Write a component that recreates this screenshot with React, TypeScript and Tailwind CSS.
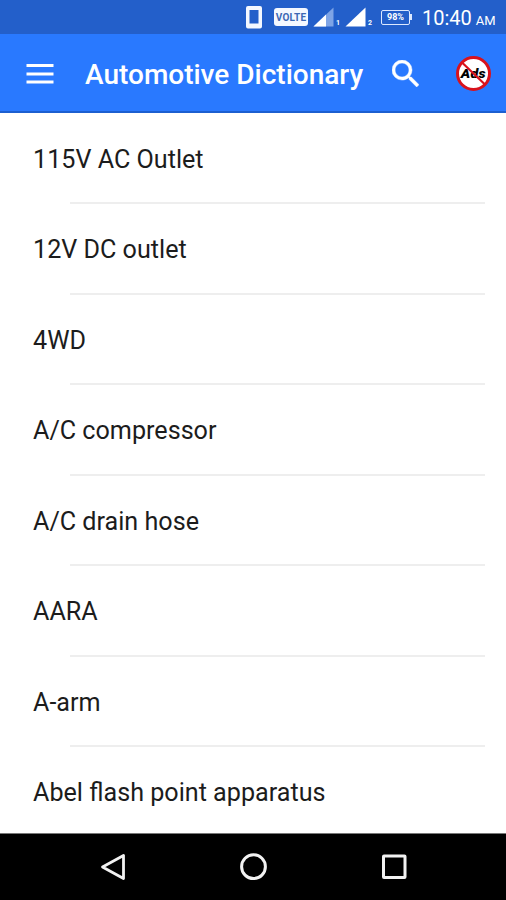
const TERMS = [
  "115V AC Outlet",
  "12V DC outlet",
  "4WD",
  "A/C compressor",
  "A/C drain hose",
  "AARA",
  "A-arm",
  "Abel flash point apparatus",
];

const PhoneIcon = () => (
  <svg width="16" height="24" viewBox="0 0 16 24" className="shrink-0">
    <path
      fill="#f4f8ff"
      fillRule="evenodd"
      d="M2 1h12a2 2 0 0 1 2 2v18.500a2 2 0 0 1-2 2H2a2 2 0 0 1-2-2V3a2 2 0 0 1 2-2zM3.500 5v13.500h9V5z"
    />
  </svg>
);

const SignalIcon: React.FC<{ sim: string; partial?: boolean }> = ({
  sim,
  partial,
}) => (
  <div className="flex items-end">
    <svg width="21" height="20" viewBox="0 0 21 20">
      <path
        d="M0.5 19.5L20.5 0.5V19.5z"
        fill={partial ? "#7ea4e6" : "#ffffff"}
      />
      {partial && <path d="M0.5 19.5L13 7.6V19.5z" fill="#ffffff" />}
    </svg>
    <span className="ml-[2px] w-[5px] text-[7px] leading-[7px] font-bold">
      {sim}
    </span>
  </div>
);

const StatusBar = () => (
  <div className="flex h-[34px] shrink-0 items-center bg-[#235fca] pl-[246px] text-white">
    <PhoneIcon />
    <span className="ml-3 flex h-[18px] w-[34px] items-center justify-center rounded-[3px] bg-[#f4f8ff] text-[10px] font-bold tracking-[0.2px] text-[#3c68b4]">
      VOLTE
    </span>
    <div className="ml-[5px] flex gap-[4px]">
      <SignalIcon sim="1" partial />
      <SignalIcon sim="2" />
    </div>
    <div className="ml-[8px] flex items-center">
      <span className="flex h-[15px] w-[29px] items-center justify-center rounded-[2px] border-[1.5px] border-[#dce8ff] text-[9px] leading-none font-bold">
        98%
      </span>
      <span className="h-[6px] w-[2px] bg-[#dce8ff]" />
    </div>
    <span className="ml-[10px] pt-[2px] text-[20px] leading-none whitespace-nowrap">
      10:40<span className="ml-[4px] text-[13px]">AM</span>
    </span>
  </div>
);

const NoAdsIcon = () => (
  <div className="relative flex size-[35px] items-center justify-center rounded-full border-[3px] border-[#d9121c] bg-white">
    <span className="scale-x-110 text-[13px] leading-none font-black tracking-[0.2px] text-black italic">
      Ads
    </span>
    <svg
      viewBox="0 0 35 35"
      className="absolute -top-[3px] -left-[3px] size-[35px]"
    >
      <path d="M6 6.5L29 28.5" stroke="#d9121c" strokeWidth="2.2" />
    </svg>
  </div>
);

const AppBar = () => (
  <header className="flex h-[79px] shrink-0 items-center border-b-2 border-[#1c5fd0] bg-[#2979ff] pt-[2px] text-white">
    <svg width="28" height="20" viewBox="0 0 28 20" className="ml-[26px]">
      <path d="M0.5 1.5h27M0.5 10h27M0.5 18h27" stroke="#fff" strokeWidth="3" />
    </svg>
    <h1 className="ml-[31px] w-[279px] pt-[3px] text-[28px] leading-none font-medium whitespace-nowrap">
      Automotive Dictionary
    </h1>
    <svg width="27" height="27" viewBox="3 3 17.5 17.5" fill="#fff" stroke="#fff" strokeWidth="0.3" className="ml-[28px]">
      <path d="M15.5 14h-.79l-.28-.27A6.471 6.471 0 0 0 16 9.5 6.5 6.5 0 1 0 9.5 16c1.61 0 3.09-.59 4.23-1.57l.27.28v.79l5 4.99L20.49 19l-4.99-5zm-6 0C7.01 14 5 11.99 5 9.5S7.01 5 9.5 5 14 7.01 14 9.5 11.99 14 9.5 14z" />
    </svg>
    <div className="ml-[37px]">
      <NoAdsIcon />
    </div>
  </header>
);

const TermRow: React.FC<{ label: string }> = ({ label }) => (
  <li className="flex h-[90.5px] shrink-0 flex-col">
    <span className="flex flex-1 items-center pt-[3px] pl-[33px] text-[25.15px] leading-none whitespace-nowrap text-[#1c1c1c]">
      {label}
    </span>
    <div className="mr-[21px] ml-[70px] h-[2px] shrink-0 bg-[#eeeeee]" />
  </li>
);

const NavBar = () => (
  <nav className="flex h-[67px] shrink-0 items-center border-t border-[#777] bg-black">
    <svg width="26" height="28" viewBox="0 0 26 28" className="ml-[100px]">
      <path d="M2.5 14L23.5 2.5V25.5z" fill="none" stroke="#f2f2f2" strokeWidth="2.8" strokeLinejoin="round" />
    </svg>
    <svg width="28" height="28" viewBox="0 0 28 28" className="ml-[114px]">
      <circle cx="13.5" cy="13.7" r="11.9" fill="none" stroke="#f2f2f2" strokeWidth="3" />
    </svg>
    <svg width="26" height="26" viewBox="0 0 26 26" className="ml-[113px]">
      <rect x="2.5" y="2" width="21.5" height="21.5" rx="0.5" fill="none" stroke="#f2f2f2" strokeWidth="3" />
    </svg>
  </nav>
);

export default function App() {
  return (
    <div className="flex h-[900px] w-[506px] flex-col overflow-hidden bg-white font-['Roboto',sans-serif]">
      <StatusBar />
      <AppBar />
      <ul className="flex min-h-0 flex-1 flex-col overflow-hidden pt-[0.6px]">
        {TERMS.map((term) => (
          <TermRow key={term} label={term} />
        ))}
      </ul>
      <NavBar />
    </div>
  );
}
